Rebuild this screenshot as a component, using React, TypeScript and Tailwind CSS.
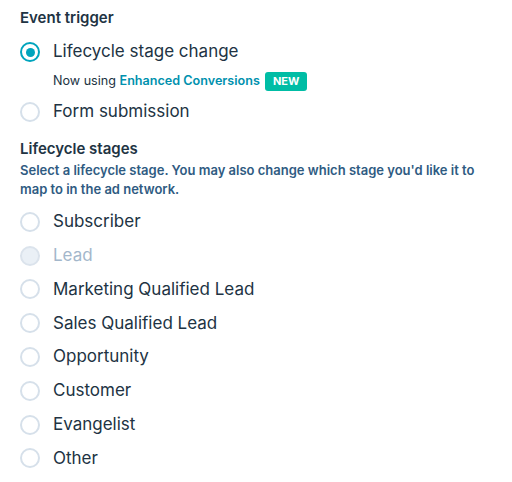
import React from "react";

function Radio({ checked = false, disabled = false }: { checked?: boolean; disabled?: boolean }) {
  if (checked) {
    return (
      <span className="flex h-[20px] w-[20px] shrink-0 items-center justify-center rounded-full border-2 border-[#00a4bd] bg-white">
        <span className="h-[9px] w-[9px] rounded-full bg-[#00a4bd]" />
      </span>
    );
  }
  return (
    <span
      className={
        disabled
          ? "h-[20px] w-[20px] shrink-0 rounded-full border-2 border-[#dbe3ec] bg-[#eaf0f6]"
          : "h-[20px] w-[20px] shrink-0 rounded-full border-2 border-[#d6e0ea] bg-white"
      }
    />
  );
}

function Row({ label, checked, disabled, h }: { label: string; checked?: boolean; disabled?: boolean; h: string }) {
  return (
    <div className={`flex items-center gap-[13px] pl-[20px] ${h}`}>
      <Radio checked={checked} disabled={disabled} />
      <span className={disabled ? "text-[17px] text-[#a3b7cb]" : "text-[17px] text-[#213343]"}>{label}</span>
    </div>
  );
}

export default function App() {
  const stages = [
    { label: "Subscriber" },
    { label: "Lead", disabled: true },
    { label: "Marketing Qualified Lead" },
    { label: "Sales Qualified Lead" },
    { label: "Opportunity" },
    { label: "Customer" },
    { label: "Evangelist" },
    { label: "Other" },
  ];
  return (
    <div className="h-[482px] w-[512px] bg-white" style={{ fontFamily: "Inter, 'Noto Sans', sans-serif" }}>
      <div className="flex flex-col pt-[6px]">
        <div className="h-[24px] pl-[20px] text-[15px] font-semibold leading-[24px] text-[#213343]">Event trigger</div>
        <div className="h-[5px]" />
        <Row label="Lifecycle stage change" checked h="h-[34px]" />
        <div className="h-[2px]" />
        <div className="flex h-[20px] items-center pl-[53px] text-[12.6px] text-[#213343]">
          <span>Now using&nbsp;</span>
          <span className="font-semibold text-[#0091ae]">Enhanced Conversions</span>
          <span className="ml-[5px] flex h-[19px] items-center rounded-[3px] bg-[#00bda5] px-[8px] text-[11px] font-bold text-white">NEW</span>
        </div>
        <div className="h-[4px]" />
        <Row label="Form submission" h="h-[34px]" />
        <div className="h-[8px]" />
        <div className="h-[24px] pl-[20px] text-[15px] font-semibold leading-[24px] text-[#213343]">Lifecycle stages</div>
        <div className="pl-[20px] pr-[20px] text-[13px] font-semibold leading-[19px] text-[#2f5b82]">
          Select a lifecycle stage. You may also change which stage you'd like it to
          <br />
          map to in the ad network.
        </div>
        <div className="h-[6px]" />
        {stages.map((s) => (
          <Row key={s.label} label={s.label} disabled={s.disabled} h="h-[33.8px]" />
        ))}
      </div>
    </div>
  );
}
